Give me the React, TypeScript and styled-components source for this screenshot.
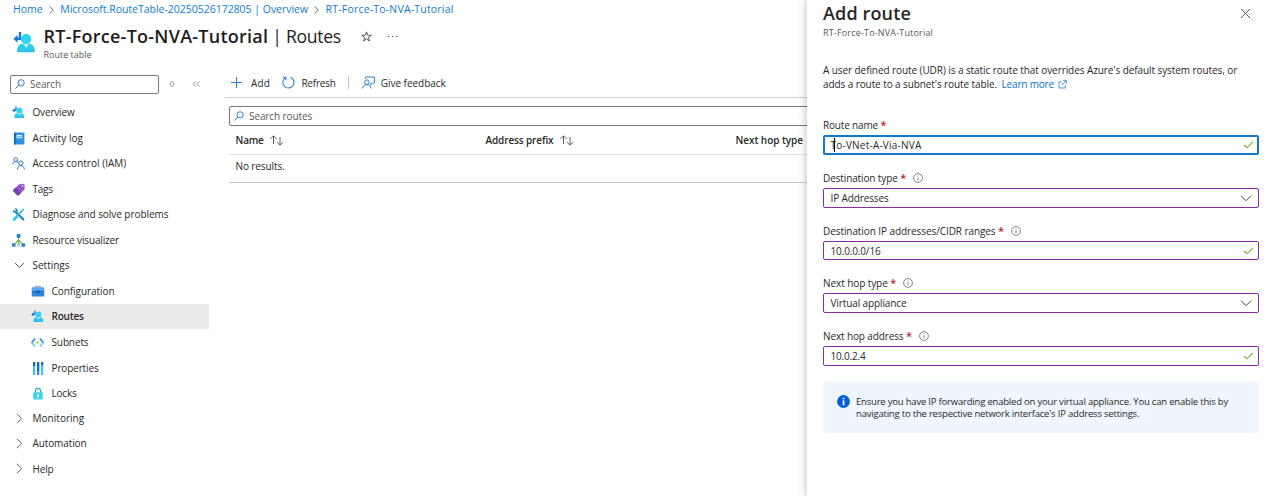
import React from 'react';
import styled, { createGlobalStyle, css } from 'styled-components';

const GlobalStyle = createGlobalStyle`
  * { box-sizing: border-box; }
  body {
    margin: 0;
    background: #fff;
    color: #292827;
    font: 400 10px/14px "Open Sans", "Noto Sans", sans-serif;
    overflow: hidden;
  }
  svg { display: block; flex: none; overflow: visible; }
`;

/* ---------- shared ---------- */

const Text = styled.span<{ $ls?: number }>`
  white-space: nowrap;
  letter-spacing: ${p => p.$ls ?? -0.1}px;
`;

const Page = styled.div`
  display: grid;
  grid-template-columns: 807px 462px;
  height: 496px;
  overflow: hidden;
`;

const Blade = styled.div`
  overflow: hidden;
  display: flex;
  flex-direction: column;
`;

/* ---------- header ---------- */

const Breadcrumb = styled.nav`
  display: flex;
  align-items: center;
  height: 18px;
  padding-left: 13px;
  font-size: 10.5px;
  color: #0f7bd3;
`;

const Crumb = styled(Text)`
  color: #0f7bd3;
`;

const CrumbSep = styled.svg`
  margin: 2px 6.5px 0 6px;
`;

const Header = styled.header`
  display: flex;
  height: 50px;
  padding: 6px 0 0 13px;
`;

const HeaderIcon = styled.div`
  padding-top: 7px;
  width: 30.5px;
`;

const TitleLine = styled.div`
  display: flex;
  align-items: center;
  height: 25px;
`;

const Title = styled.h1`
  margin: 0;
  font-size: 18px;
  line-height: 25px;
  font-weight: 600;
  white-space: nowrap;
  letter-spacing: 0.25px;
  color: #1f1e1d;
`;

const TitleSection = styled.span`
  font-weight: 400;
  letter-spacing: -0.3px;
  margin-left: 4px;
  font-size: 17.6px;
`;

const TitleActions = styled.div`
  display: flex;
  align-items: center;
  gap: 16px;
  margin-left: 20px;
`;

const Subtitle = styled.div<{ $top?: number }>`
  padding-top: ${p => p.$top ?? 0}px;
  font-size: 9px;
  line-height: 12px;
  color: #5a5856;
`;

/* ---------- body ---------- */

const Body = styled.div`
  display: grid;
  grid-template-columns: 225px 582px;
  flex: 1;
`;

const Sidebar = styled.aside`
  display: flex;
  flex-direction: column;
`;

const SideSearchRow = styled.div`
  display: flex;
  align-items: center;
  height: 20px;
  margin: 6px 0 6px 10px;
`;

const SearchField = styled.div<{ $w: number; $h: number }>`
  display: flex;
  align-items: center;
  gap: 5px;
  width: ${p => p.$w}px;
  height: ${p => p.$h}px;
  padding-left: 4px;
  border: 1px solid #7b7977;
  border-radius: 2px;
  color: #5a5856;
`;

const NavRow = styled.div<{ $h: number; $nested?: boolean; $active?: boolean }>`
  display: flex;
  align-items: center;
  width: 209px;
  height: ${p => p.$h}px;
  padding-left: ${p => (p.$nested ? 31 : 12)}px;
  ${p => p.$active && css`
    background: #edebe9;
    font-weight: 600;
  `}
`;

const NavIcon = styled.span`
  display: flex;
  width: 20.5px;
  align-items: center;
`;

const NavLabel = styled(Text)`
  margin-bottom: 1px;
`;

const Main = styled.main`
  display: flex;
  flex-direction: column;
`;

const Toolbar = styled.div`
  display: flex;
  align-items: center;
  height: 30px;
  padding-left: 6px;
  border-bottom: 1px solid #d2d0ce;
`;

const Command = styled.div<{ $gap: number; $mr?: number }>`
  display: flex;
  align-items: center;
  gap: ${p => p.$gap}px;
  margin-right: ${p => p.$mr ?? 0}px;
`;

const Divider = styled.span`
  width: 1px;
  height: 13px;
  background: #c8c6c4;
  margin-right: 13px;
`;

const Content = styled.div`
  padding: 8px 0 0 4px;
`;

const Table = styled.div`
  border-bottom: 1px solid #c8c6c4;
`;

const TableRow = styled.div<{ $h: number }>`
  display: grid;
  grid-template-columns: 250px 250px 1fr;
  align-items: center;
  height: ${p => p.$h}px;
  padding-left: 6.5px;
`;

const TableHead = styled(TableRow)`
  font-weight: 600;
  border-bottom: 1px solid #e1dfdd;
`;

const EmptyRow = styled(TableRow)`
  padding-bottom: 6px;
`;

const Cell = styled.div`
  display: flex;
  align-items: center;
  gap: 6px;
`;

/* ---------- side panel ---------- */

const Panel = styled.section`
  z-index: 1;
  background: #fff;
  box-shadow: 0 0 9px rgba(0, 0, 0, 0.28);
  padding: 1px 10px 0 16px;
`;

const PanelHead = styled.div`
  display: flex;
  justify-content: space-between;
  align-items: center;
  height: 25px;
  padding-right: 9px;
`;

const PanelTitle = styled.h2`
  margin: 0;
  font-size: 18px;
  line-height: 25px;
  font-weight: 600;
  letter-spacing: 0.14px;
`;

const PanelText = styled.div`
  margin-top: 24px;
  height: 28px;
  line-height: 14px;
`;

const Line = styled.div`
  display: flex;
  align-items: center;
  height: 14px;
`;

const Link = styled(Text)`
  color: #0078d4;
  margin: 0 4px 0 4.5px;
`;

const Field = styled.div<{ $top: number }>`
  margin-top: ${p => p.$top}px;
`;

const Label = styled.label`
  display: flex;
  align-items: center;
  height: 14px;
  margin-bottom: 3px;
`;

const Required = styled.span`
  color: #b4262c;
  font-weight: 600;
  font-size: 11px;
  margin: 0 7px 0 2.5px;
`;

const Input = styled.div<{ $h: number; $focus?: boolean }>`
  display: flex;
  align-items: center;
  justify-content: space-between;
  height: ${p => p.$h}px;
  padding: 0 ${p => (p.$focus ? 4 : 5)}px 0 ${p => (p.$focus ? 5.5 : 6.5)}px;
  border: ${p => (p.$focus ? '2px solid #0f78d1' : '1px solid #8a2da5')};
  border-radius: 2px;
`;

const Value = styled(Text)`
  position: relative;
`;

const Caret = styled.span`
  position: absolute;
  left: 3.5px;
  top: 0;
  width: 1px;
  height: 14px;
  background: #000;
`;

const Notice = styled.div`
  display: flex;
  gap: 6px;
  height: 51px;
  margin-top: 16px;
  padding: 13px 0 0 14px;
  background: #eff6ff;
  border-radius: 2px;
  font-size: 9.5px;
  line-height: 12px;
`;

const NoticeText = styled.div`
  display: flex;
  flex-direction: column;
  padding-top: 1px;
`;

/* ---------- icons ---------- */

const RouteTableIcon = ({ size = 13 }: { size?: number }) => (
  <svg width={size} height={size} viewBox="0 0 24 24">
    <defs>
      <linearGradient id="person" x1="0" y1="0" x2="0" y2="1">
        <stop offset="0" stopColor="#32cdf0" />
        <stop offset="1" stopColor="#2fc0e8" />
      </linearGradient>
    </defs>
    <path d="M7.3 1v7.2H2" fill="none" stroke="#1c74d4" strokeWidth="2.4" />
    <path d="M4.800 4.200v8L.4 8.200z" fill="#1c74d4" />
    <path d="M4.200 22.200c0-5 1.600-8.800 5.200-8.800h8c3.600 0 5.300 3.800 5.300 8.800z" fill="url(#person)" />
    <path d="M11 13h5.400l-2.700 4.600z" fill="#e8fbff" />
    <circle cx="13.700" cy="8.300" r="5.400" fill="#32d4f5" />
  </svg>
);

const LogIcon = () => (
  <svg width="13" height="13" viewBox="0 0 13 13">
    <rect x="2" y=".5" width="10.4" height="12" rx=".8" fill="#2f93e0" />
    <rect x="2" y=".5" width="1.6" height="12" rx=".6" fill="#0f63b5" />
    <rect x="4.5" y="3" width="5.6" height="3.2" fill="#d9f1ff" />
    <rect x="5.4" y="4.2" width="3.8" height=".9" fill="#4aa3e6" />
  </svg>
);

const PeopleIcon = () => (
  <svg width="13" height="13" viewBox="0 0 13 13" fill="none" stroke="#2b72d0" strokeWidth="1">
    <circle cx="3.700" cy="2.600" r="1.900" />
    <path d="M.7 7.600c.2-2 1.300-3.100 3-3.100 1 0 1.800.300 2.300 1" />
    <circle cx="8.800" cy="6.200" r="2.200" />
    <path d="M5.400 12.400c.2-2.400 1.400-3.800 3.400-3.800s3.300 1.400 3.600 3.800" />
  </svg>
);

const TagIcon = () => (
  <svg width="13" height="13" viewBox="0 0 13 13">
    <path d="M7.200 1.200 11.600.7c.6 0 .9.300.9.900l.2 4.600-5.900 6c-.5.5-1 .5-1.500 0L1.400 8.300c-.5-.5-.5-1 0-1.500z" fill="#9259cb" />
    <path d="M1.400 6.800 4 4.200l5 5.500-2.400 2.500c-.5.500-1 .500-1.500 0L1.400 8.300c-.5-.5-.5-1 0-1.500z" fill="#7a41b4" />
    <circle cx="10.500" cy="2.900" r=".8" fill="#e6d3f7" />
  </svg>
);

const ToolsIcon = () => (
  <svg width="13" height="13" viewBox="0 0 13 13" fill="none" strokeLinecap="round">
    <path d="M3.600 3.700 11.300 11.400" stroke="#1f88c9" strokeWidth="2.200" />
    <path d="M1.600 2.800c.7 1.500 2 1.700 3 .8.700-1 .3-2-.8-2.600" stroke="#1f88c9" strokeWidth="1.600" />
    <path d="M11.600 1.300 6.600 6.600" stroke="#35b8dd" strokeWidth="1.600" />
    <path d="M5.200 8.200 2 11.500" stroke="#2cc3ea" strokeWidth="2.600" />
  </svg>
);

const VisualizerIcon = () => (
  <svg width="13" height="13" viewBox="0 0 13 13">
    <path d="M6.500 3v4.500M6.500 6.500 2 10.500M6.500 6.500l4.500 4M6.500 7v4" stroke="#7cbf3c" strokeWidth="1.100" fill="none" />
    <circle cx="6.500" cy="7" r="1.300" fill="#6bb42f" />
    <rect x="4.700" y="0" width="3.700" height="3.700" rx=".5" fill="#1f7fdb" />
    <rect x="0" y="9.200" width="3.500" height="3.500" rx=".5" fill="#2b83d6" />
    <rect x="9.500" y="9.200" width="3.500" height="3.500" rx=".5" fill="#2b83d6" />
    <rect x="5.300" y="9.700" width="2.500" height="2.500" rx=".5" fill="#8cc9ef" />
  </svg>
);

const ToolboxIcon = () => (
  <svg width="14" height="13" viewBox="0 0 14 13">
    <path d="M4.300 2.800V1.300h5v1.500" fill="none" stroke="#a3a3a3" strokeWidth="1.100" />
    <rect x=".8" y="2.600" width="12.400" height="9" rx=".8" fill="#2f84dc" />
    <rect x=".8" y="2.600" width="12.400" height="3.200" rx=".8" fill="#5ea9ef" />
    <rect x=".8" y="6" width="12.400" height="1" fill="#1f72c8" />
    <rect x="5" y="5.600" width="4" height="2.400" rx=".4" fill="#1560b4" />
  </svg>
);

const SubnetIcon = () => (
  <svg width="13" height="13" viewBox="0 0 13 13" fill="none">
    <path d="M3.700 3 .7 6.500" stroke="#2383d4" strokeWidth="1.400" strokeLinecap="round" />
    <path d="M.7 6.500 3.700 10" stroke="#53cfee" strokeWidth="1.400" strokeLinecap="round" />
    <path d="M9.300 3l3 3.500" stroke="#2383d4" strokeWidth="1.400" strokeLinecap="round" />
    <path d="M12.300 6.500 9.300 10" stroke="#53cfee" strokeWidth="1.400" strokeLinecap="round" />
    <circle cx="6.500" cy="6.500" r="1.100" fill="#77c043" />
  </svg>
);

const PropertiesIcon = () => (
  <svg width="13" height="13" viewBox="0 0 13 13">
    <rect x="2" y="0" width="2.200" height="13" rx=".5" fill="#3ec5ec" />
    <rect x="6" y="0" width="2.200" height="13" rx=".5" fill="#2f8fdf" />
    <rect x="10" y="0" width="2.200" height="13" rx=".5" fill="#3ec5ec" />
    <rect x="2" y="0" width="2.200" height="4" fill="#1868bd" />
    <rect x="6" y="0" width="2.200" height="9" fill="#1868bd" />
    <rect x="10" y="0" width="2.200" height="3" fill="#1868bd" />
  </svg>
);

const LockIcon = () => (
  <svg width="13" height="13" viewBox="0 0 13 13">
    <path d="M4.400 6.500V3.800c0-3.200 5.200-3.200 5.200 0v2.700" fill="none" stroke="#25aed2" strokeWidth="1.300" />
    <rect x="2.200" y="5.200" width="9.600" height="7.400" rx="1" fill="#42d3f3" />
    <circle cx="7" cy="8.300" r="1" fill="#fff" />
    <path d="M6.500 8.500h1v2.200h-1z" fill="#fff" />
  </svg>
);

const Chevron = ({ down }: { down?: boolean }) => (
  <svg width="15" height="10" viewBox="0 0 15 10" fill="none" stroke="#605e5c" strokeWidth="1">
    <path d={down ? 'M3 2 7.500 6.500 12 2' : 'M5 -.200 9.700 4.500 5 9.200'} />
  </svg>
);

const SearchIcon = () => (
  <svg width="10" height="10" viewBox="0 0 10 10" fill="none" stroke="#2f7fd0" strokeWidth="1">
    <circle cx="6.100" cy="3.800" r="3.100" />
    <path d="M3.900 6.100.5 9.500" />
  </svg>
);

const SortIcon = () => (
  <svg width="13" height="11" viewBox="0 0 13 11" fill="none" stroke="#605e5c" strokeWidth="1">
    <path d="M3.500 9V1M.5 3.800l3-3 3 3M10 2v8M7 7.200l3 3 3-3" />
  </svg>
);

const StarIcon = () => (
  <svg width="11" height="11" viewBox="0 0 11 11" fill="none" stroke="#484644" strokeWidth=".9">
    <path d="M5.500.9 6.700 4.200l3.600.1-2.900 2.200 1.100 3.500-3-2.100-3 2.100 1.100-3.500L.7 4.300l3.600-.1z" />
  </svg>
);

const MoreIcon = () => (
  <svg width="10" height="3" viewBox="0 0 10 3" fill="#605e5c">
    <rect x="0" y="1" width="1.400" height="1" />
    <rect x="4" y="1" width="1.400" height="1" />
    <rect x="8" y="1" width="1.400" height="1" />
  </svg>
);

const PlusIcon = () => (
  <svg width="11" height="11" viewBox="0 0 11 11" stroke="#2b83d0" strokeWidth="1.100">
    <path d="M5.500 0v11M0 5.500h11" />
  </svg>
);

const RefreshIcon = () => (
  <svg width="13" height="13" viewBox="0 0 13 13" fill="none" stroke="#2b83d0" strokeWidth="1.100">
    <path d="M8.500 1.200a5.600 5.600 0 1 1-5.200.5" />
    <path d="M.7 1.300h3.200v3" />
  </svg>
);

const FeedbackIcon = () => (
  <svg width="13" height="13" viewBox="0 0 13 13" fill="none" stroke="#2b7fd0" strokeWidth="1">
    <path d="M3.500 2.500V1h8.900v6.200h-1.600L8.900 8.900V7" />
    <circle cx="4.900" cy="6.200" r="2.300" />
    <path d="M.7 12.500c.2-2.400 1.700-3.900 4.200-3.900s4 1.500 4.200 3.900" />
  </svg>
);

const ExternalIcon = () => (
  <svg width="9" height="9" viewBox="0 0 9 9" fill="none" stroke="#3d8be0" strokeWidth=".9">
    <path d="M4 1.800H1v6.200h6.200V5M5.200.6h3.200v3.200M8.300.7 4 5" />
  </svg>
);

const InfoIcon = () => (
  <svg width="10" height="10" viewBox="0 0 10 10" fill="none" stroke="#6b6967" strokeWidth=".8">
    <circle cx="5" cy="5" r="4.400" />
    <path d="M5 4.300v3.200M5 2.400v1" />
  </svg>
);

const CheckIcon = () => (
  <svg width="9" height="8" viewBox="0 0 9 8" fill="none" stroke="#6bb32c" strokeWidth="1.100">
    <path d="M.2 4 3 6.800 8.900.9" />
  </svg>
);

const CloseIcon = () => (
  <svg width="9" height="9" viewBox="0 0 9 9" stroke="#484644" strokeWidth=".9">
    <path d="M0 0l9 9M9 0 0 9" />
  </svg>
);

const SelectChevron = () => (
  <svg width="13" height="7" viewBox="0 0 13 7" fill="none" stroke="#484644" strokeWidth="1">
    <path d="M1 .700l5 5 5-5" />
  </svg>
);

const NoticeIcon = () => (
  <svg width="13" height="13" viewBox="0 0 13 13">
    <circle cx="6.500" cy="6.500" r="6.400" fill="#015cda" />
    <rect x="5.700" y="5.300" width="1.700" height="5" fill="#fff" />
    <rect x="5.700" y="2.700" width="1.700" height="1.600" fill="#fff" />
  </svg>
);

/* ---------- data ---------- */

type NavItem = {
  label: string;
  h: number;
  ls: number;
  icon: React.ReactNode;
  nested?: boolean;
  active?: boolean;
};

const nav: NavItem[] = [
  { label: 'Overview', h: 25, ls: -0.17, icon: <RouteTableIcon /> },
  { label: 'Activity log', h: 26, ls: 0.06, icon: <LogIcon /> },
  { label: 'Access control (IAM)', h: 25, ls: 0.02, icon: <PeopleIcon /> },
  { label: 'Tags', h: 26, ls: -0.25, icon: <TagIcon /> },
  { label: 'Diagnose and solve problems', h: 25, ls: -0.05, icon: <ToolsIcon /> },
  { label: 'Resource visualizer', h: 26, ls: -0.14, icon: <VisualizerIcon /> },
  { label: 'Settings', h: 25, ls: -0.01, icon: <Chevron down /> },
  { label: 'Configuration', h: 26, ls: -0.06, icon: <ToolboxIcon />, nested: true },
  { label: 'Routes', h: 25, ls: -0.2, icon: <RouteTableIcon />, nested: true, active: true },
  { label: 'Subnets', h: 26, ls: -0.12, icon: <SubnetIcon />, nested: true },
  { label: 'Properties', h: 26, ls: -0.14, icon: <PropertiesIcon />, nested: true },
  { label: 'Locks', h: 25, ls: -0.2, icon: <LockIcon />, nested: true },
  { label: 'Monitoring', h: 25, ls: 0.03, icon: <Chevron /> },
  { label: 'Automation', h: 25, ls: -0.11, icon: <Chevron /> },
  { label: 'Help', h: 26, ls: -0.16, icon: <Chevron /> },
];

type FieldItem = {
  label: string;
  value: string;
  ls: number;
  vls: number;
  top: number;
  h: number;
  select?: boolean;
  info?: boolean;
  focus?: boolean;
};

const fields: FieldItem[] = [
  { label: 'Route name', value: 'To-VNet-A-Via-NVA', ls: -0.17, vls: 0.22, top: 27, h: 20, focus: true },
  { label: 'Destination type', value: 'IP Addresses', ls: -0.12, vls: -0.13, top: 16, h: 20, select: true, info: true },
  { label: 'Destination IP addresses/CIDR ranges', value: '10.0.0.0/16', ls: -0.08, vls: -0.14, top: 16, h: 19, info: true },
  { label: 'Next hop type', value: 'Virtual appliance', ls: -0.08, vls: -0.11, top: 16, h: 20, select: true, info: true },
  { label: 'Next hop address', value: '10.0.2.4', ls: -0.12, vls: -0.18, top: 16, h: 20, info: true },
];

const Separator = () => (
  <CrumbSep width="5" height="8" viewBox="0 0 5 8" fill="none" stroke="#605e5c" strokeWidth=".9">
    <path d="M.5.300 4.300 4 .5 7.700" />
  </CrumbSep>
);

export default function App() {
  return (
    <Page>
      <GlobalStyle />
      <Blade>
        <Breadcrumb>
          <Crumb $ls={0.03}>Home</Crumb>
          <Separator />
          <Crumb $ls={-0.02}>Microsoft.RouteTable-20250526172805 | Overview</Crumb>
          <Separator />
          <Crumb $ls={0.19}>RT-Force-To-NVA-Tutorial</Crumb>
        </Breadcrumb>
        <Header>
          <HeaderIcon><RouteTableIcon size={23} /></HeaderIcon>
          <div>
            <TitleLine>
              <Title>RT-Force-To-NVA-Tutorial<TitleSection>| Routes</TitleSection></Title>
              <TitleActions><StarIcon /><MoreIcon /></TitleActions>
            </TitleLine>
            <Subtitle><Text $ls={0}>Route table</Text></Subtitle>
          </div>
        </Header>
        <Body>
          <Sidebar>
            <SideSearchRow>
              <SearchField $w={149} $h={19}><SearchIcon /><Text>Search</Text></SearchField>
              <svg width="50" height="10" viewBox="0 0 50 10" fill="none" stroke="#8a8886" strokeWidth=".9">
                <path d="M11.200 4 13 2.300 14.800 4v2L13 7.700 11.200 6z" />
                <path d="M37 2.300 34.400 5 37 7.700M40.400 2.300 37.800 5l2.600 2.700" />
              </svg>
            </SideSearchRow>
            {nav.map(n => (
              <NavRow key={n.label} $h={n.h} $nested={n.nested} $active={n.active}>
                <NavIcon>{n.icon}</NavIcon>
                <NavLabel $ls={n.ls}>{n.label}</NavLabel>
              </NavRow>
            ))}
          </Sidebar>
          <Main>
            <Toolbar>
              <Command $gap={9} $mr={12}><PlusIcon /><Text $ls={0.1}>Add</Text></Command>
              <Command $gap={6.5} $mr={12}><RefreshIcon /><Text $ls={-0.2}>Refresh</Text></Command>
              <Divider />
              <Command $gap={6}><FeedbackIcon /><Text $ls={-0.03}>Give feedback</Text></Command>
            </Toolbar>
            <Content>
              <SearchField $w={640} $h={20}><SearchIcon /><Text>Search routes</Text></SearchField>
              <Table>
                <TableHead $h={29}>
                  <Cell><Text $ls={-0.2}>Name</Text><SortIcon /></Cell>
                  <Cell><Text $ls={-0.12}>Address prefix</Text><SortIcon /></Cell>
                  <Cell><Text $ls={-0.06}>Next hop type</Text></Cell>
                </TableHead>
                <EmptyRow $h={27}><Text>No results.</Text></EmptyRow>
              </Table>
            </Content>
          </Main>
        </Body>
      </Blade>
      <Panel>
        <PanelHead>
          <PanelTitle>Add route</PanelTitle>
          <CloseIcon />
        </PanelHead>
        <Subtitle $top={1}><Text $ls={0.18}>RT-Force-To-NVA-Tutorial</Text></Subtitle>
        <PanelText>
          <Line><Text $ls={-0.08}>A user defined route (UDR) is a static route that overrides Azure's default system routes, or</Text></Line>
          <Line>
            <Text $ls={-0.09}>adds a route to a subnet's route table.</Text>
            <Link $ls={-0.18}>Learn more</Link>
            <ExternalIcon />
          </Line>
        </PanelText>
        {fields.map(f => (
          <Field key={f.label} $top={f.top}>
            <Label>
              <Text $ls={f.ls}>{f.label}</Text>
              <Required>*</Required>
              {f.info && <InfoIcon />}
            </Label>
            <Input $h={f.h} $focus={f.focus}>
              <Value $ls={f.vls}>{f.value}{f.focus && <Caret />}</Value>
              {f.select ? <SelectChevron /> : <CheckIcon />}
            </Input>
          </Field>
        ))}
        <Notice>
          <NoticeIcon />
          <NoticeText>
            <Text $ls={-0.2}>Ensure you have IP forwarding enabled on your virtual appliance. You can enable this by</Text>
            <Text $ls={-0.2}>navigating to the respective network interface's IP address settings.</Text>
          </NoticeText>
        </Notice>
      </Panel>
    </Page>
  );
}
